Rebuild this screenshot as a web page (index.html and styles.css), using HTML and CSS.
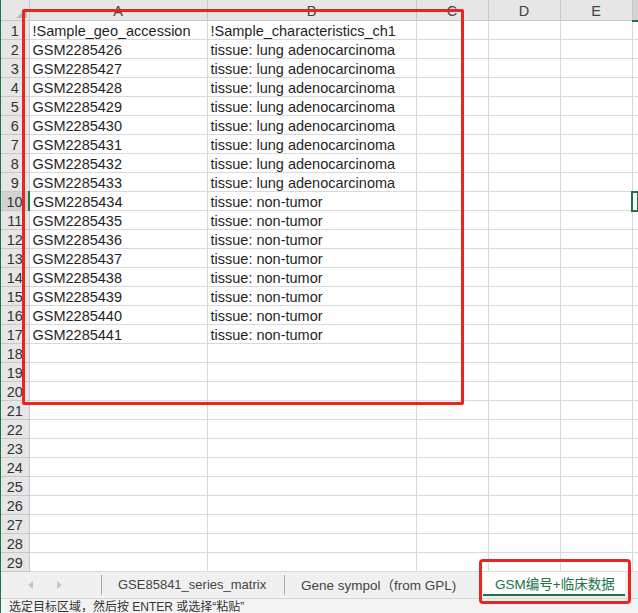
FILE: index.html
```html
<!DOCTYPE html>
<html lang="zh-CN">
<head>
    <meta charset="UTF-8">
    <title>GSM编号+临床数据</title>
    <link rel="stylesheet" href="styles.css">
</head>
<body>
    <div class="window">
        <table class="sheet">
            <colgroup>
                <col class="col-rh"><col class="col-a"><col class="col-b"><col class="col-s"><col class="col-s"><col class="col-s"><col class="col-f">
            </colgroup>
            <thead>
                <tr>
                    <th class="corner"><svg width="11" height="10" viewBox="0 0 11 10"><path d="M11 0 L11 10 L0 10 Z" fill="#b9b9b9"/></svg></th>
                    <th>A</th><th>B</th><th>C</th><th>D</th><th>E</th><th class="head-active"></th>
                </tr>
            </thead>
            <tbody>
                <tr><th>1</th><td>!Sample_geo_accession</td><td>!Sample_characteristics_ch1</td><td></td><td></td><td></td><td></td></tr>
                <tr><th>2</th><td>GSM2285426</td><td>tissue: lung adenocarcinoma</td><td></td><td></td><td></td><td></td></tr>
                <tr><th>3</th><td>GSM2285427</td><td>tissue: lung adenocarcinoma</td><td></td><td></td><td></td><td></td></tr>
                <tr><th>4</th><td>GSM2285428</td><td>tissue: lung adenocarcinoma</td><td></td><td></td><td></td><td></td></tr>
                <tr><th>5</th><td>GSM2285429</td><td>tissue: lung adenocarcinoma</td><td></td><td></td><td></td><td></td></tr>
                <tr><th>6</th><td>GSM2285430</td><td>tissue: lung adenocarcinoma</td><td></td><td></td><td></td><td></td></tr>
                <tr><th>7</th><td>GSM2285431</td><td>tissue: lung adenocarcinoma</td><td></td><td></td><td></td><td></td></tr>
                <tr><th>8</th><td>GSM2285432</td><td>tissue: lung adenocarcinoma</td><td></td><td></td><td></td><td></td></tr>
                <tr><th>9</th><td>GSM2285433</td><td>tissue: lung adenocarcinoma</td><td></td><td></td><td></td><td></td></tr>
                <tr><th class="row-active">10</th><td>GSM2285434</td><td>tissue: non-tumor</td><td></td><td></td><td></td><td class="cell-active"></td></tr>
                <tr><th>11</th><td>GSM2285435</td><td>tissue: non-tumor</td><td></td><td></td><td></td><td></td></tr>
                <tr><th>12</th><td>GSM2285436</td><td>tissue: non-tumor</td><td></td><td></td><td></td><td></td></tr>
                <tr><th>13</th><td>GSM2285437</td><td>tissue: non-tumor</td><td></td><td></td><td></td><td></td></tr>
                <tr><th>14</th><td>GSM2285438</td><td>tissue: non-tumor</td><td></td><td></td><td></td><td></td></tr>
                <tr><th>15</th><td>GSM2285439</td><td>tissue: non-tumor</td><td></td><td></td><td></td><td></td></tr>
                <tr><th>16</th><td>GSM2285440</td><td>tissue: non-tumor</td><td></td><td></td><td></td><td></td></tr>
                <tr><th>17</th><td>GSM2285441</td><td>tissue: non-tumor</td><td></td><td></td><td></td><td></td></tr>
                <tr><th>18</th><td></td><td></td><td></td><td></td><td></td><td></td></tr>
                <tr><th>19</th><td></td><td></td><td></td><td></td><td></td><td></td></tr>
                <tr><th>20</th><td></td><td></td><td></td><td></td><td></td><td></td></tr>
                <tr><th>21</th><td></td><td></td><td></td><td></td><td></td><td></td></tr>
                <tr><th>22</th><td></td><td></td><td></td><td></td><td></td><td></td></tr>
                <tr><th>23</th><td></td><td></td><td></td><td></td><td></td><td></td></tr>
                <tr><th>24</th><td></td><td></td><td></td><td></td><td></td><td></td></tr>
                <tr><th>25</th><td></td><td></td><td></td><td></td><td></td><td></td></tr>
                <tr><th>26</th><td></td><td></td><td></td><td></td><td></td><td></td></tr>
                <tr><th>27</th><td></td><td></td><td></td><td></td><td></td><td></td></tr>
                <tr><th>28</th><td></td><td></td><td></td><td></td><td></td><td></td></tr>
                <tr><th>29</th><td></td><td></td><td></td><td></td><td></td><td></td></tr>
            </tbody>
        </table>

        <div class="tabbar">
            <div class="tab-nav">
                <svg width="5" height="8" viewBox="0 0 5 8"><path d="M5 0 L0 4 L5 8 Z" fill="#c6c6c6"/></svg>
                <svg width="5" height="8" viewBox="0 0 5 8"><path d="M0 0 L5 4 L0 8 Z" fill="#c6c6c6"/></svg>
            </div>
            <span class="tab-sep"></span>
            <div class="tab tab-first">GSE85841_series_matrix</div>
            <span class="tab-sep"></span>
            <div class="tab tab-second">Gene sympol（from GPL)</div>
            <div class="tab tab-active">GSM编号+临床数据</div>
        </div>

        <div class="status">选定目标区域，然后按 ENTER 或选择“粘贴”</div>

        <!-- red annotation boxes drawn over the screenshot -->
        <div class="mark mark-data"></div>
        <div class="mark mark-tab"></div>
    </div>
</body>
</html>
```

FILE: styles.css
```css
* {
    box-sizing: border-box;
}
body {
    margin: 0;
    width: 638px;
    height: 613px;
    overflow: hidden;
    background-color: #fff;
    font-family: "Liberation Sans", "Noto Sans CJK SC", sans-serif;
    color: #1f1f1f;
}
.window {
    position: relative;
    height: 613px;
    border-left: 1px solid #217346;
    display: flex;
    flex-direction: column;
}
.sheet {
    flex: none;
    width: 637px;
    border-collapse: collapse;
    table-layout: fixed;
    font-size: 14.5px;
}
.col-rh { width: 28px; }
.col-a { width: 178px; }
.col-b { width: 209px; }
.col-s { width: 72px; }
.col-f { width: 6px; }
.sheet tr {
    height: 19px;
}
.sheet th,
.sheet td {
    padding: 0;
    border: 1px solid #d9d9d9;
    white-space: nowrap;
    overflow: hidden;
}
.sheet td {
    padding: 2px 0 0 3px;
    line-height: 16px;
}
.sheet thead tr {
    height: 20px;
}
.sheet thead th {
    background-color: #e6e6e6;
    border-color: #c8c8c8;
    border-top: none;
    font-weight: normal;
    color: #444;
    line-height: 18px;
    padding-top: 2px;
}
.sheet tbody th {
    background-color: #e6e6e6;
    border-color: #c8c8c8;
    border-left: none;
    font-weight: normal;
    color: #333;
    line-height: 16px;
    padding-top: 2px;
}
.sheet th.corner {
    border-left: none;
    text-align: right;
    vertical-align: bottom;
    padding: 0 2px 2px 0;
}
.corner svg {
    display: block;
    margin-left: auto;
}
.sheet th.head-active {
    background-color: #d3d3d3;
    border-bottom: 2px solid #217346;
}
.sheet th.row-active {
    background-color: #d3d3d3;
    border-right: 2px solid #217346;
}
.sheet td.cell-active {
    outline: 2px solid #217346;
    outline-offset: -1px;
}
.tabbar {
    flex: none;
    height: 27px;
    display: flex;
    align-items: center;
    background-color: #f0f0f0;
    border-bottom: 1px solid #d6d6d6;
    font-size: 13px;
    color: #444;
}
.tab-nav {
    width: 100px;
    display: flex;
    align-items: center;
    gap: 24px;
    padding-left: 27px;
}
.tab-nav svg {
    display: block;
}
.tab-sep {
    width: 1px;
    height: 20px;
    background-color: #a9a9a9;
}
.tab {
    height: 100%;
    display: flex;
    align-items: center;
    padding-left: 16px;
    padding-bottom: 2px;
}
.tab-first {
    width: 182px;
}
.tab-second {
    width: 198px;
    font-size: 13.5px;
}
.tab-active {
    width: 142px;
    height: 24px;
    align-self: flex-start;
    padding-left: 12px;
    padding-bottom: 0;
    background-color: #fff;
    border-bottom: 2px solid #217346;
    color: #217346;
    font-size: 13.5px;
}
.status {
    flex: none;
    height: 15px;
    padding: 1px 0 0 8px;
    background-color: #f3f3f3;
    font-size: 12px;
    line-height: 15px;
    color: #333;
    white-space: nowrap;
}
.mark {
    position: absolute;
    border: 3px solid #e8261f;
    border-radius: 2px;
}
.mark-data {
    left: 21px;
    top: 9px;
    width: 442px;
    height: 396px;
}
.mark-tab {
    left: 478px;
    top: 559px;
    width: 152px;
    height: 45px;
    border-radius: 4px;
}
```
